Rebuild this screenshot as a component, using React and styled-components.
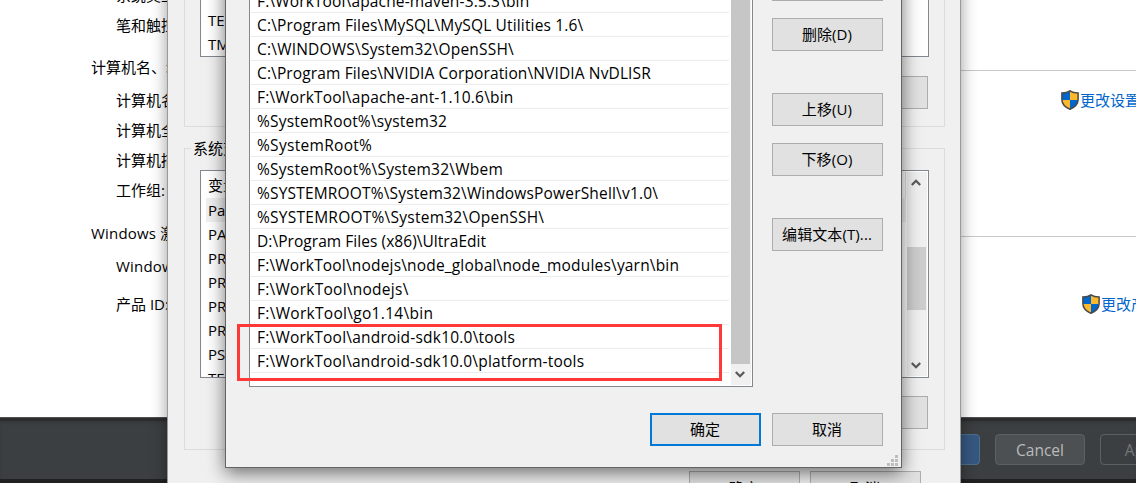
import React from "react";
import styled, { createGlobalStyle, css } from "styled-components";

const Global = createGlobalStyle`
  body { margin: 0; background: #fff; }
  * { box-sizing: border-box; }
`;

const Desktop = styled.div`
  position: relative;
  width: 1136px;
  height: 483px;
  overflow: hidden;
  display: flex;
  flex-direction: column;
  background: #212121;
  color: #000;
  font-family: "Open Sans", "Noto Sans CJK SC", sans-serif;
  font-size: 15px;
  white-space: nowrap;
`;

/* System information page, at the back */
const SystemPage = styled.div`
  height: 417px;
  flex: none;
  display: flex;
  justify-content: space-between;
  overflow: hidden;
  background: #fff;
`;
const InfoColumn = styled.div`
  width: 220px;
  padding-left: 91px;
  margin-top: -20px;
`;
const InfoLine = styled.div`
  height: 30px;
  line-height: 30px;
  padding-left: ${(p) => (p.$indent ? 25 : 0)}px;
  margin-top: ${(p) => p.$gap || 0}px;
  letter-spacing: ${(p) => p.$track || 0}px;
`;
const ActionColumn = styled.div`
  width: 175px;
`;
const ActionSection = styled.div`
  height: ${(p) => p.$height}px;
  padding-top: ${(p) => p.$top}px;
  padding-left: ${(p) => p.$left}px;
  border-bottom: ${(p) => (p.$line ? "1px solid #c8c8c8" : "none")};
`;
const ActionLink = styled.div`
  display: flex;
  align-items: center;
  height: 20px;
  line-height: 20px;
  gap: 1px;
  color: #0066cc;

  svg { flex: none; }
`;
const LinkText = styled.span`
  height: 20px;
`;

/* IDE dialog footer */
const Footer = styled.div`
  height: 62px;
  flex: none;
  display: flex;
  gap: 15px;
  padding: 14px 0 0 890px;
  background: #3c3f41;
  border-top: 1px solid #515151;
  box-shadow: inset 0 3px 0 #2b2c2d, inset 0 5px 3px #36393a;
`;
const FooterButton = styled.div`
  flex: none;
  width: 90px;
  height: 31px;
  margin-top: 2px;
  border: 1px solid ${(p) => (p.$kind === "primary" ? "#4c708c" : "#5e6060")};
  border-radius: 4px;
  background: ${(p) => (p.$kind === "primary" ? "#365880" : p.$kind === "disabled" ? "transparent" : "#4c5052")};
  color: ${(p) => (p.$kind === "disabled" ? "#777" : "#bbb")};
  font-size: 15.5px;
  line-height: 31px;
  text-align: center;
`;

const windowFrame = css`
  position: absolute;
  background: #f0f0f0;
  display: flex;
`;
const VariablesWindow = styled.div`
  ${windowFrame}
  left: 167px;
  top: -60px;
  width: 794px;
  height: 620px;
  padding: 40px 15px 0 16px;
  flex-direction: column;
  border: 1px solid #9a9a9a;
  box-shadow: 0 4px 15px rgba(0, 0, 0, 0.4);
`;
const GroupBox = styled.div`
  flex: none;
  width: 761px;
  height: ${(p) => p.$height}px;
  margin-top: ${(p) => p.$gap || 0}px;
  border: 1px solid #dcdcdc;
  padding: 0 15px;
  display: flex;
  flex-direction: column;
`;
const Legend = styled.div`
  align-self: flex-start;
  height: 20px;
  line-height: 20px;
  margin: -11px 0 12px -9px;
  padding: 0 2px;
  background: #f0f0f0;
`;
const VariableList = styled.div`
  flex: none;
  display: flex;
  justify-content: space-between;
  width: 729px;
  height: ${(p) => p.$height}px;
  border: 1px solid #828790;
  background: #fff;
  padding: 1px;
  overflow: hidden;
`;
const VariableNames = styled.div`
  width: 704px;
  display: flex;
  flex-direction: column;
  padding-left: 4px;
`;
const VariableName = styled.div`
  flex: none;
  height: ${(p) => (p.$header ? 26 : 24)}px;
  line-height: ${(p) => (p.$header ? 27 : 24)}px;
  padding-left: 2px;
  background: ${(p) => (p.$selected ? "#f0f0f0" : "transparent")};
  border-right: ${(p) => (p.$header ? "1px solid #e0e0e0" : "none")};
`;
const ButtonRow = styled.div`
  display: flex;
  justify-content: flex-end;
  gap: ${(p) => p.$gap || 0}px;
  margin-top: ${(p) => p.$top}px;
  padding-right: ${(p) => p.$right || 0}px;
`;

const PushButton = styled.div`
  flex: none;
  width: 111px;
  height: 33px;
  margin-top: ${(p) => p.$gap || 0}px;
  padding: 0 1px ${(p) => (p.$low ? 0 : 2)}px 0;
  display: flex;
  align-items: center;
  justify-content: center;
  letter-spacing: 0.1px;
  background: #e1e1e1;
  border: ${(p) => (p.$primary ? "2px solid #0078d7" : "1px solid #adadad")};
`;

const EditWindow = styled.div`
  ${windowFrame}
  left: 225px;
  top: -60px;
  width: 677px;
  height: 528px;
  padding: 35px 18px 0 23px;
  flex-direction: column;
  border: 1px solid #646464;
  box-shadow: 0 5px 17px rgba(0, 0, 0, 0.55);
`;
const EditBody = styled.div`
  display: flex;
  justify-content: space-between;
`;
const PathList = styled.div`
  width: 504px;
  height: 411px;
  display: flex;
  border: 1px solid #828790;
  background: #fff;
  padding: 1px;
`;
const PathRows = styled.div`
  width: 478px;
  padding-top: 11px;
`;
const PathRow = styled.div`
  height: 24px;
  line-height: 25px;
  font-size: 15.5px;
  padding-left: 6px;
  border-bottom: 1px solid #ececec;
  letter-spacing: ${(p) => p.$track}px;
`;
const ScrollBar = styled.div`
  width: 20px;
  margin-left: ${(p) => p.$offset || 0}px;
  display: flex;
  flex-direction: column;
  background: #f0f0f0;
`;
const ScrollThumb = styled.div`
  width: 19px;
  height: ${(p) => p.$height}px;
  margin-top: ${(p) => p.$gap || 0}px;
  background: ${(p) => p.$tone || "#c6c6c6"};
`;
const ScrollArrow = styled.div`
  height: 21px;
  display: flex;
  align-items: center;
  justify-content: center;
  padding-right: 2px;
  margin-top: ${(p) => (p.$end ? "auto" : "0")};
  padding-bottom: ${(p) => (p.$end ? 2 : 0)}px;
`;
const SideButtons = styled.div`
  width: 111px;
  display: flex;
  flex-direction: column;
`;
const Grip = styled.svg`
  position: absolute;
  right: 3px;
  bottom: 1px;
`;
const Highlight = styled.div`
  position: absolute;
  left: 237px;
  top: 324px;
  width: 485px;
  height: 57px;
  border: 3px solid #ff3838;
`;

const Chevron = ({ up }) => (
  <svg width="10" height="8" viewBox="0 0 10 8">
    <path d={up ? "M0.8 6 L5 1.8 L9.2 6" : "M0.8 2 L5 6.2 L9.2 2"} fill="none" stroke="#5a5a5a" strokeWidth="2.3" />
  </svg>
);

const Shield = () => (
  <svg width="18" height="20" viewBox="0 0 18 20">
    <path d="M9 .7C7 2.2 4 3 .8 3v6.5c0 4.5 3.5 7.8 8.2 9.8z" fill="#0066cc" />
    <path d="M9 .7C11 2.2 14 3 17.2 3v6.5c0 4.5-3.5 7.8-8.2 9.8z" fill="#fdb92c" />
    <path d="M.8 10H9v9.300C4.300 17.300 1.200 14.500.8 10z" fill="#fdb92c" />
    <path d="M17.2 10H9v9.300c4.700-2 7.800-4.800 8.200-9.300z" fill="#0066cc" />
    <path d="M9 .8C7 2.300 4 3 .9 3v6.500c0 4.500 3.400 7.800 8.100 9.800 4.700-2 8.100-5.300 8.100-9.800V3C14 3 11 2.300 9 .8z" fill="none" stroke="#4a4a4a" strokeWidth="1.5" />
  </svg>
);

const paths = [
  ["F:\\WorkTool\\apache-maven-3.5.3\\bin", 0.15],
  ["C:\\Program Files\\MySQL\\MySQL Utilities 1.6\\", 0.15],
  ["C:\\WINDOWS\\System32\\OpenSSH\\", 0.21],
  ["C:\\Program Files\\NVIDIA Corporation\\NVIDIA NvDLISR", 0.13],
  ["F:\\WorkTool\\apache-ant-1.10.6\\bin", 0.17],
  ["%SystemRoot%\\system32", 0.19],
  ["%SystemRoot%", 0.3],
  ["%SystemRoot%\\System32\\Wbem", 0.24],
  ["%SYSTEMROOT%\\System32\\WindowsPowerShell\\v1.0\\", 0.18],
  ["%SYSTEMROOT%\\System32\\OpenSSH\\", 0.25],
  ["D:\\Program Files (x86)\\UltraEdit", 0.05],
  ["F:\\WorkTool\\nodejs\\node_global\\node_modules\\yarn\\bin", 0.18],
  ["F:\\WorkTool\\nodejs\\", 0.26],
  ["F:\\WorkTool\\go1.14\\bin", 0.3],
  ["F:\\WorkTool\\android-sdk10.0\\tools", 0.21],
  ["F:\\WorkTool\\android-sdk10.0\\platform-tools", 0.2],
];

const info = [
  { text: "系统类型:", indent: true, gap: 0 },
  { text: "笔和触控:", indent: true, gap: 0 },
  { text: "计算机名、域和工作组设置", gap: 12 },
  { text: "计算机名:", indent: true, gap: 3 },
  { text: "计算机全名:", indent: true },
  { text: "计算机描述:", indent: true },
  { text: "工作组:", indent: true },
  { text: "Windows 激活", gap: 13, track: 0.2 },
  { text: "Windows 已激活", indent: true, gap: 3, track: 0.2 },
  { text: "产品 ID:", indent: true, gap: 8 },
];

const variables = ["Path", "PATHEXT", "PROCESSOR", "PROCESSOR", "PROCESSOR", "PROCESSOR", "PSModulePath", "TEMP"];

export default function App() {
  return (
    <>
      <Global />
      <Desktop>
        <SystemPage>
          <InfoColumn>
            {info.map((l) => (
              <InfoLine key={l.text} $indent={l.indent} $gap={l.gap} $track={l.track}>{l.text}</InfoLine>
            ))}
          </InfoColumn>
          <ActionColumn>
            <ActionSection $height={71} $line />
            <ActionSection $height={166} $top={19} $left={100} $line>
              <ActionLink><Shield /><LinkText>更改设置</LinkText></ActionLink>
            </ActionSection>
            <ActionSection $height={180} $top={57} $left={121}>
              <ActionLink><Shield /><LinkText>更改产品密钥</LinkText></ActionLink>
            </ActionSection>
          </ActionColumn>
        </SystemPage>
        <Footer>
          <FooterButton $kind="primary">OK</FooterButton>
          <FooterButton>Cancel</FooterButton>
          <FooterButton $kind="disabled">Apply</FooterButton>
        </Footer>

        <VariablesWindow>
          <GroupBox $height={146}>
            <VariableList $height={75}>
              <VariableNames>
                <VariableName />
                <VariableName>TEMP</VariableName>
                <VariableName>TMP</VariableName>
              </VariableNames>
            </VariableList>
            <ButtonRow $top={19} $right={1}><PushButton /></ButtonRow>
          </GroupBox>
          <GroupBox $height={302} $gap={21}>
            <Legend>系统变量(S)</Legend>
            <VariableList $height={208}>
              <VariableNames>
                <VariableName $header>变量</VariableName>
                {variables.map((v, i) => (
                  <VariableName key={i} $selected={i === 0}>{v}</VariableName>
                ))}
              </VariableNames>
              <ScrollBar>
                <ScrollArrow><Chevron up /></ScrollArrow>
                <ScrollThumb $gap={54} $height={63} $tone="#cdcdcd" />
                <ScrollArrow $end><Chevron /></ScrollArrow>
              </ScrollBar>
            </VariableList>
            <ButtonRow $top={18} $right={1}><PushButton /></ButtonRow>
          </GroupBox>
          <ButtonRow $top={21} $gap={10} $right={24}>
            <PushButton $low>确定</PushButton>
            <PushButton $low>取消</PushButton>
          </ButtonRow>
        </VariablesWindow>

        <EditWindow>
          <EditBody>
            <PathList>
              <PathRows>
                {paths.map(([text, track]) => (
                  <PathRow key={text} $track={track}>{text}</PathRow>
                ))}
              </PathRows>
              <ScrollBar $offset={2}>
                <ScrollThumb $height={387} />
                <ScrollArrow $end><Chevron /></ScrollArrow>
              </ScrollBar>
            </PathList>
            <SideButtons>
              <PushButton $gap={-8} />
              <PushButton $gap={17}>删除(D)</PushButton>
              <PushButton $gap={42}>上移(U)</PushButton>
              <PushButton $gap={17}>下移(O)</PushButton>
              <PushButton $gap={42}>编辑文本(T)...</PushButton>
            </SideButtons>
          </EditBody>
          <ButtonRow $top={26} $gap={11}>
            <PushButton $primary>确定</PushButton>
            <PushButton>取消</PushButton>
          </ButtonRow>
          <Grip width="11" height="11" fill="#bdbdbd">
            <path d="M8 0h3v3h-3zM8 4h3v3h-3zM8 8h3v3h-3zM4 4h3v3h-3zM4 8h3v3h-3zM0 8h3v3h-3z" />
          </Grip>
        </EditWindow>
        <Highlight />
      </Desktop>
    </>
  );
}
